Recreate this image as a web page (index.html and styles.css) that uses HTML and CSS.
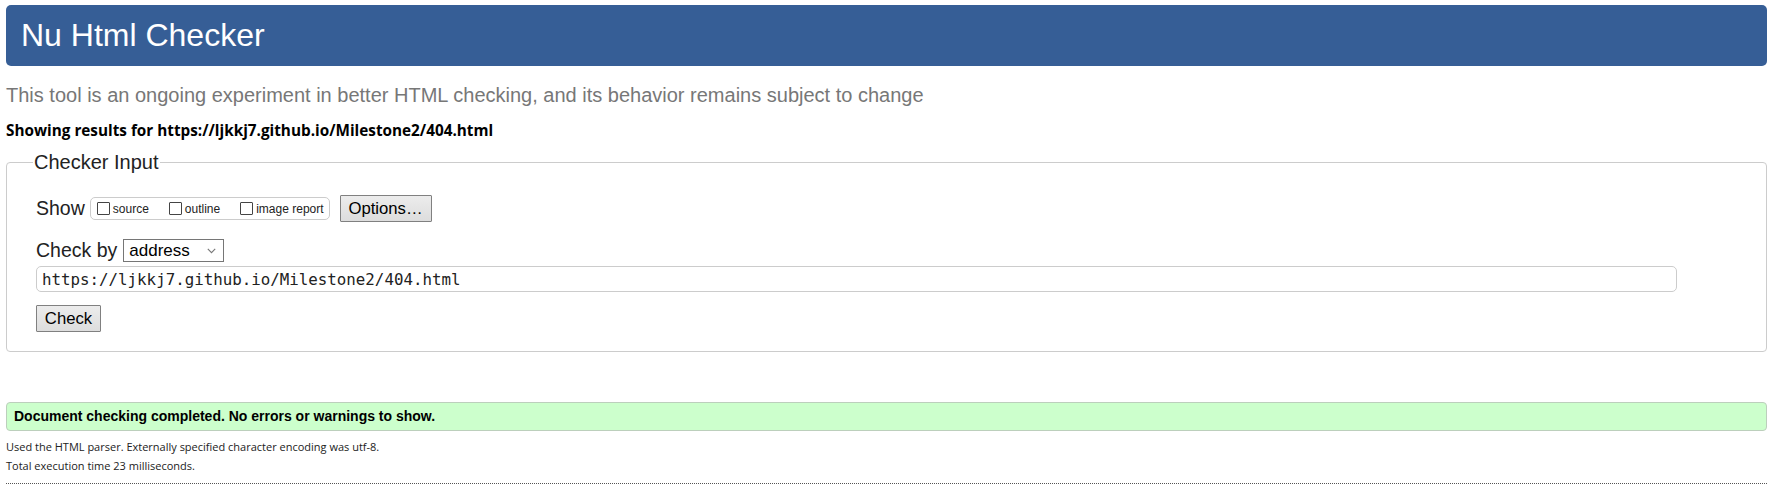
FILE: index.html
```html
<!DOCTYPE html>
<html lang="en">
<head>
<meta charset="utf-8">
<title>Nu Html Checker</title>
<link rel="stylesheet" href="styles.css">
</head>
<body>
<header class="masthead"><h1 class="title">Nu Html Checker</h1></header>
<p class="tagline">This tool is an ongoing experiment in better HTML checking, and its behavior remains subject to change</p>
<p class="showing">Showing results for https://ljkkj7.github.io/Milestone2/404.html</p>
<form class="checker">
  <fieldset class="input-set">
    <legend class="input-legend">Checker Input</legend>
    <div class="row show-row">
      <span class="row-label">Show</span>
      <span class="show-group">
        <label class="opt"><input type="checkbox" class="cb">source</label>
        <label class="opt"><input type="checkbox" class="cb">outline</label>
        <label class="opt"><input type="checkbox" class="cb">image report</label>
      </span>
      <button type="button" class="btn btn-options">Options…</button>
    </div>
    <div class="row checkby-row">
      <span class="row-label">Check by</span>
      <span class="select-wrap">
        <select class="by-select"><option>address</option></select>
        <svg class="chev" width="9" height="6" viewBox="0 0 9 6"><path d="M0.8 0.8 L4.5 4.6 L8.2 0.8" fill="none" stroke="#777" stroke-width="1.1"/></svg>
      </span>
    </div>
    <input class="url" type="text" value="https://ljkkj7.github.io/Milestone2/404.html">
    <div class="submit-row"><button type="button" class="btn btn-check">Check</button></div>
  </fieldset>
</form>
<div class="success">Document checking completed. No errors or warnings to show.</div>
<div class="details-block">
  <p class="details">Used the HTML parser. Externally specified character encoding was utf-8.</p>
  <p class="details">Total execution time 23 milliseconds.</p>
</div>
<div class="sep"></div>
</body>
</html>
```
FILE: styles.css
```css
html, body {
  margin: 0;
  background: #fff;
}
body {
  padding: 5px 3px 0 6px;
  font-family: "Liberation Sans", Arial, sans-serif;
  color: #000;
}
.masthead {
  height: 61px;
  background: #365e96;
  border-radius: 5px;
}
.title {
  margin: 0;
  padding-left: 15px;
  font-size: 32px;
  font-weight: normal;
  line-height: 61px;
  color: #fff;
}
.tagline {
  margin: 18px 0 0 0;
  font-size: 20px;
  line-height: 22px;
  color: #777;
}
.showing {
  margin: 15px 0 0 0;
  font-family: "Open Sans", sans-serif;
  font-weight: bold;
  font-size: 15.3px;
  line-height: 18px;
  color: #000;
}
.checker {
  margin: 11px 0 0 0;
}
.input-set {
  margin: 0;
  padding: 21px 89px 19px 29px;
  border: 1px solid #ccc;
  border-radius: 4px;
  min-width: 0;
}
.input-legend {
  margin-left: -3px;
  padding: 0 1px;
  font-size: 20px;
  line-height: 24px;
  color: #222;
}
.row {
  display: flex;
  align-items: center;
}
.row-label {
  font-size: 19.5px;
  color: #222;
}
.show-row {
  height: 27px;
}
.show-group {
  display: inline-flex;
  align-items: center;
  height: 21px;
  margin-left: 5px;
  padding: 0 5px 0 6px;
  border: 1px solid #ccc;
  border-radius: 5px;
}
.opt {
  display: inline-flex;
  align-items: center;
  font-size: 12px;
  color: #222;
  margin-right: 20px;
}
.opt:last-child {
  margin-right: 0;
}
.cb {
  appearance: none;
  -webkit-appearance: none;
  width: 13px;
  height: 13px;
  margin: 0 3px 0 0;
  border: 1px solid #444;
  border-radius: 1px;
  background: #fff;
}
.btn {
  font-family: "Liberation Sans", Arial, sans-serif;
  font-size: 16.7px;
  color: #000;
  background: linear-gradient(#ececec, #dddddd);
  border: 1px solid #808080;
  border-radius: 1px;
  margin: 0;
}
.btn-options {
  height: 27px;
  width: 92px;
  margin-left: 10px;
  padding: 0;
}
.checkby-row {
  height: 23px;
  margin-top: 17px;
}
.select-wrap {
  position: relative;
  display: inline-flex;
  margin-left: 6px;
}
.by-select {
  appearance: none;
  -webkit-appearance: none;
  width: 101px;
  height: 23px;
  margin: 0;
  padding: 0 0 0 5px;
  font-family: "Liberation Sans", Arial, sans-serif;
  font-size: 17px;
  color: #000;
  background: #fff;
  border: 1px solid #767676;
  border-radius: 0;
}
.chev {
  position: absolute;
  right: 8px;
  top: 9px;
  pointer-events: none;
}
.url {
  display: block;
  box-sizing: border-box;
  width: 100%;
  height: 26px;
  margin: 4px 0 0 0;
  padding: 0 0 0 5px;
  font-family: "DejaVu Sans Mono", monospace;
  font-size: 15.8px;
  color: #222;
  border: 1px solid #ccc;
  border-radius: 5px;
  background: #fff;
}
.submit-row {
  margin-top: 13px;
  display: flex;
}
.btn-check {
  height: 27px;
  width: 65px;
  padding: 0;
}
.success {
  margin-top: 50px;
  height: 27px;
  line-height: 27px;
  padding-left: 7px;
  background: #ccffcc;
  border: 1px solid #bccfbc;
  border-radius: 4px;
  font-weight: bold;
  font-size: 14px;
  color: #000;
}
.details-block {
  padding-top: 6px;
}
.details {
  margin: 0;
  font-family: "Open Sans", sans-serif;
  font-size: 11px;
  line-height: 19px;
  color: #222;
}
.sep {
  margin-top: 8px;
  border-top: 1px dotted #555;
}
```
